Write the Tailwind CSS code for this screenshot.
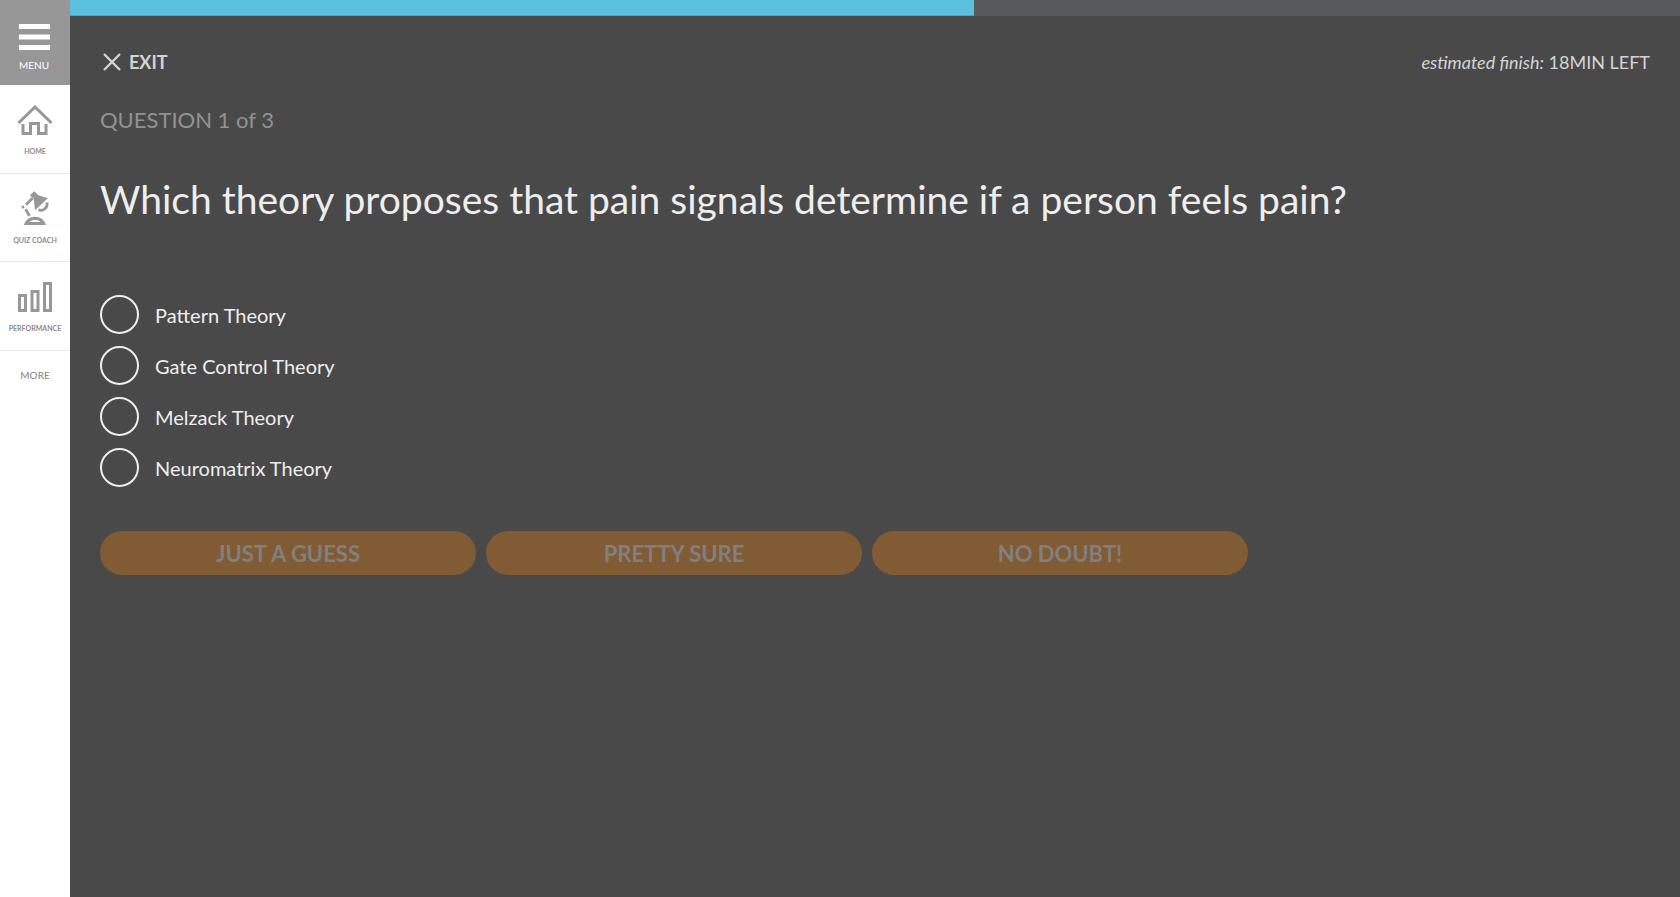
<!DOCTYPE html>
<html lang="en">
<head>
<meta charset="utf-8">
<meta name="viewport" content="width=device-width, initial-scale=1">
<title>Quiz Coach</title>
<script src="https://cdn.jsdelivr.net/npm/@tailwindcss/browser@4"></script>
</head>
<body class="flex min-h-screen bg-[#494949] font-['Lato','Noto_Sans',sans-serif] text-[#eeeeee]">
<nav class="flex w-[70px] shrink-0 flex-col bg-white text-[#8c8c8c]" aria-label="Main">
  <button type="button" class="flex h-[85px] flex-col items-center bg-[#979797] pt-6 pr-[2px] text-white">
    <svg class="h-[26px] w-[31px]" viewBox="0 0 31 26" fill="currentColor" aria-hidden="true"><path d="M0 0h31v5H0zM0 10.500h31v5H0zM0 21h31v5H0z"/></svg>
    <span class="mt-[7px] text-[10px] leading-4">MENU</span>
  </button>
  <a href="#home" class="flex h-[89px] flex-col items-center border-b border-[#e9e9e9] pt-5">
    <svg class="h-[30px] w-[36px]" viewBox="0 0 36 30" fill="none" stroke="#979797" stroke-width="3" aria-hidden="true"><path d="M1.500 18 18 2l16.500 16"/><path d="M6 19v9.500h7.500V18.500h8V28.500H29V19"/></svg>
    <span class="mt-[10px] text-[7px] leading-3 font-bold">HOME</span>
  </a>
  <a href="#quiz-coach" class="flex h-[88px] flex-col items-center border-b border-[#e9e9e9] pt-4">
    <svg class="h-[36px] w-[30px]" viewBox="0 0 30 36" aria-hidden="true" fill="#979797"><path d="M9.800 5.300 14.300 1.200 18.300 5.300 27.800 8.300 15 20.300 13.800 9z"/><path d="M12.500 8.300 6 14.800M5.500 19.200l4 6.500" fill="none" stroke="#979797" stroke-width="2.800"/><circle cx="3" cy="17" r="1.500"/><path d="M27 12.500a6.300 6.300 0 0 1-8.500 7.300" fill="none" stroke="#979797" stroke-width="2.800"/><path fill-rule="evenodd" d="M4 35c1.500-5.500 6-8.300 11-8.300s9.500 2.800 11 8.300zM9.500 32h11c-1.500-1.500-3.500-2.300-5.500-2.300s-4 .8-5.500 2.300z"/></svg>
    <span class="mt-[8px] text-[7px] leading-3 font-bold">QUIZ COACH</span>
  </a>
  <a href="#performance" class="flex h-[89px] flex-col items-center border-b border-[#e9e9e9] pt-5">
    <svg class="h-[30px] w-[34px]" viewBox="0 0 34 30" fill="none" stroke="#979797" stroke-width="3" aria-hidden="true"><path d="M1.500 13.500h6v15h-6zM14 9.500h6v19h-6zM26.500 1.500h6v27h-6z"/></svg>
    <span class="mt-[10px] text-[7px] leading-3 font-bold">PERFORMANCE</span>
  </a>
  <a href="#more" class="flex h-12 items-center justify-center text-[10px] font-medium">MORE</a>
</nav>
<main class="min-w-0 flex-1">
  <div class="h-4 bg-[#58595b]" role="progressbar" aria-label="Quiz progress" aria-valuemin="0" aria-valuemax="100" aria-valuenow="56">
    <div class="h-full border-b border-[#4ba6c6] bg-[#5bc0de]" style="width:56.15%"></div>
  </div>
  <div class="px-[30px]">
    <header class="flex items-center justify-between pt-8">
      <button type="button" class="flex items-center gap-2 pl-[3px] text-[18px] leading-7 font-bold text-[#d4d4d4]">
        <svg class="size-[18px]" viewBox="0 0 18 18" fill="none" stroke="currentColor" stroke-width="2.400" aria-hidden="true"><path d="m1 1 16 16M17 1 1 17"/></svg>
        EXIT
      </button>
      <p class="text-[18px] leading-7 text-[#d4d4d4]"><em>estimated finish:</em> 18MIN LEFT</p>
    </header>
    <p class="mt-7 text-[22px] leading-8 text-[#929292]">QUESTION 1 of 3</p>
    <form>
      <fieldset>
        <legend class="pt-[35px] text-[39px] leading-14">Which theory proposes that pain signals determine if a person feels pain?</legend>
        <div class="mt-[68px] flex flex-col gap-3 text-[20px]">
          <label class="flex items-center gap-4"><input type="radio" name="answer" class="size-[39px] appearance-none rounded-full border-2 border-[#eeeeee] checked:bg-[#eeeeee]">Pattern Theory</label>
          <label class="flex items-center gap-4"><input type="radio" name="answer" class="size-[39px] appearance-none rounded-full border-2 border-[#eeeeee] checked:bg-[#eeeeee]">Gate Control Theory</label>
          <label class="flex items-center gap-4"><input type="radio" name="answer" class="size-[39px] appearance-none rounded-full border-2 border-[#eeeeee] checked:bg-[#eeeeee]">Melzack Theory</label>
          <label class="flex items-center gap-4"><input type="radio" name="answer" class="size-[39px] appearance-none rounded-full border-2 border-[#eeeeee] checked:bg-[#eeeeee]">Neuromatrix Theory</label>
        </div>
      </fieldset>
      <div class="mt-11 grid max-w-[1148px] grid-cols-3 gap-[10px] text-[22px] font-bold text-[#808080]">
        <button type="button" disabled class="h-11 rounded-[22px] bg-[#815b34]">JUST A GUESS</button>
        <button type="button" disabled class="h-11 rounded-[22px] bg-[#815b34]">PRETTY SURE</button>
        <button type="button" disabled class="h-11 rounded-[22px] bg-[#815b34]">NO DOUBT!</button>
      </div>
    </form>
  </div>
</main>
</body>
</html>
